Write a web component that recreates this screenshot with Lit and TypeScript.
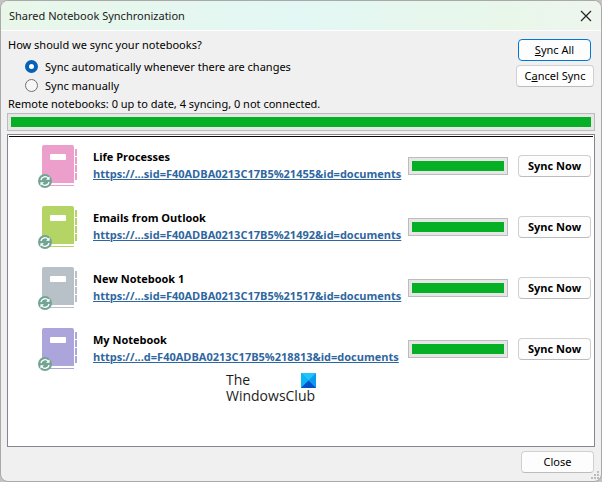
import { LitElement, html, css, svg } from "lit";
import { customElement, property } from "lit/decorators.js";

interface Notebook {
  name: string;
  link: string;
  color: string;
}

const NOTEBOOKS: Notebook[] = [
  { name: "Life Processes", link: "https://...sid=F40ADBA0213C17B5%21455&id=documents", color: "#eb9fca" },
  { name: "Emails from Outlook", link: "https://...sid=F40ADBA0213C17B5%21492&id=documents", color: "#b4d465" },
  { name: "New Notebook 1", link: "https://...sid=F40ADBA0213C17B5%21517&id=documents", color: "#b8c0c8" },
  { name: "My Notebook", link: "https://...d=F40ADBA0213C17B5%218813&id=documents", color: "#aba5dc" },
];

const buttonStyles = css`
  button {
    box-sizing: border-box;
    height: 22px;
    padding: 0;
    border: 1px solid #d0d0d0;
    border-bottom-color: #bcbcbc;
    border-radius: 4px;
    background: #fdfdfd;
    color: #000;
    font: inherit;
    line-height: 20px;
    white-space: nowrap;
  }
`;

@customElement("sync-progress")
export class SyncProgress extends LitElement {
  @property({ type: Number }) value = 100;
  @property() label = "";

  static styles = css`
    :host {
      display: block;
      box-sizing: border-box;
      height: 18px;
      padding: 3px;
      border: 1px solid #bcbcbc;
      background: #e6e6e6;
    }
    .fill {
      height: 10px;
      background: #06b025;
    }
  `;

  render() {
    return html`<div
      class="fill"
      role="progressbar"
      aria-label=${this.label}
      aria-valuenow=${this.value}
      style="width:${this.value}%"
    ></div>`;
  }
}

@customElement("notebook-icon")
export class NotebookIcon extends LitElement {
  @property() color = "#eb9fca";

  static styles = css`
    :host,
    svg {
      display: block;
    }
  `;

  render() {
    return html`<svg width="40" height="44" viewBox="0 0 40 44" aria-hidden="true">
      <g fill=${this.color}>
        <path d="M6 0h28q2 0 2 2v36H4V2q0-2 2-2z" />
        ${[4, 12, 20, 28].map((y) => svg`<rect x="37" y=${y} width="2" height="7" />`)}
        <rect x="4" y="40" width="32" height="1" />
      </g>
      <rect x="12" y="9" width="16" height="6" rx="1" fill="#fff" />
      <circle cx="7" cy="36" r="7" fill="#72a493" />
      <g fill="none" stroke="#fff" stroke-width="1.3">
        <path d="M2.9 35A4.2 4.2 0 0 1 10.2 33.2" />
        <path d="M11.1 37A4.2 4.2 0 0 1 3.8 38.8" />
      </g>
      <path d="M11.6 31.2V34.8H8zM2.4 40.8V37.2H6z" fill="#fff" />
    </svg>`;
  }
}

@customElement("notebook-row")
export class NotebookRow extends LitElement {
  @property({ attribute: false }) notebook!: Notebook;

  static styles = [
    buttonStyles,
    css`
      :host {
        display: flex;
        align-items: flex-start;
        height: 61px;
        padding: 0 3px 0 30px;
        box-sizing: border-box;
        font-family: "Open Sans", "Noto Sans", sans-serif;
        font-weight: 700;
      }
      notebook-icon {
        margin-top: 8px;
        flex: none;
      }
      .text {
        flex: 1;
        min-width: 0;
        margin: 11px 0 0 15px;
        line-height: 17px;
        white-space: nowrap;
      }
      .name {
        color: #000;
      }
      a {
        color: #2e66a0;
        text-decoration: underline;
      }
      sync-progress {
        flex: none;
        width: 100px;
        margin-top: 20px;
      }
      button {
        flex: none;
        width: 73px;
        margin: 18px 0 0 10px;
      }
    `,
  ];

  render() {
    const { name, link, color } = this.notebook;
    return html`
      <notebook-icon .color=${color}></notebook-icon>
      <div class="text">
        <div class="name">${name}</div>
        <a href="#">${link}</a>
      </div>
      <sync-progress .label=${name}></sync-progress>
      <button>Sync Now</button>
    `;
  }
}

@customElement("app-root")
export class AppRoot extends LitElement {
  static styles = [
    buttonStyles,
    css`
      :host {
        display: block;
        height: 100vh;
        box-sizing: border-box;
        background: #c4c2c2;
        font: 11px/16px "Noto Sans", "Open Sans", sans-serif;
        color: #000;
      }
      .dialog {
        position: relative;
        display: flex;
        flex-direction: column;
        height: 100%;
        box-sizing: border-box;
        border: 1px solid #a9a9a9;
        border-radius: 8px;
        background: #f0f0f0;
        overflow: hidden;
      }
      header {
        display: flex;
        align-items: center;
        justify-content: space-between;
        height: 29px;
        flex: none;
        padding: 0 9px 0 8px;
        border-bottom: 1px solid #fff;
        background: linear-gradient(90deg, #e9f7ea, #e3f7f4 50%, #e9f7ea 85%, #eef5ee);
      }
      h1 {
        margin: 0;
        font-size: 11px;
        font-weight: 400;
        color: #1a1a1a;
      }
      .x {
        display: block;
        width: 12px;
        height: 12px;
        border: 0;
        background: none;
      }
      .x svg {
        display: block;
      }
      .top {
        display: flex;
        justify-content: space-between;
        padding: 6px 7px 0;
      }
      fieldset {
        margin: 0;
        padding: 0;
        border: 0;
      }
      legend {
        padding: 0;
        line-height: 16px;
      }
      label {
        display: flex;
        align-items: center;
        gap: 7px;
        height: 19px;
        padding-left: 17px;
      }
      .first {
        margin-top: 4px;
      }
      input {
        appearance: none;
        box-sizing: border-box;
        width: 13px;
        height: 13px;
        margin: 0;
        border: 1px solid #707070;
        border-radius: 50%;
        background: #f6f6f6;
      }
      input:checked {
        border: 4px solid #0560b8;
        background: #fff;
      }
      .actions {
        display: flex;
        flex-direction: column;
        align-items: flex-end;
        gap: 4px;
        padding-top: 2px;
      }
      .all {
        width: 73px;
        margin-right: 3px;
        border-color: #0078d4;
      }
      .cancel {
        width: 78px;
      }
      .status {
        margin: 1px 7px 0;
      }
      .total {
        margin: 1px 6px 0;
      }
      .list {
        position: relative;
        flex: 1;
        margin: 3px 6px 4px;
        border: 1px solid #828790;
        background: #fff;
      }
      .rule {
        height: 1px;
        margin: 1px 1px 0;
        background: #1a0005;
      }
      .brand {
        position: absolute;
        left: 218px;
        top: 237px;
        width: 90px;
        font: 14px/16px "Open Sans", sans-serif;
        color: #1c1c1c;
      }
      .brand-top {
        display: flex;
        justify-content: space-between;
        align-items: center;
      }
      footer {
        display: flex;
        justify-content: flex-end;
        padding: 0 7px 8px;
      }
      .close {
        width: 73px;
      }
      .grip {
        position: absolute;
        right: 2px;
        bottom: 2px;
      }
    `,
  ];

  render() {
    return html`
      <div class="dialog">
        <header>
          <h1>Shared Notebook Synchronization</h1>
          <button class="x" aria-label="Close window">
            <svg width="12" height="12" viewBox="0 0 12 12">
              <path d="M1 1l10 10M11 1L1 11" stroke="#222" stroke-width="1.2" />
            </svg>
          </button>
        </header>
        <div class="top">
          <fieldset>
            <legend>How should we sync your notebooks?</legend>
            <label class="first"><input type="radio" name="mode" checked />Sync automatically whenever there are changes</label>
            <label><input type="radio" name="mode" />Sync manually</label>
          </fieldset>
          <div class="actions">
            <button class="all"><u>S</u>ync All</button>
            <button class="cancel">C<u>a</u>ncel Sync</button>
          </div>
        </div>
        <div class="status">Remote notebooks: 0 up to date, 4 syncing, 0 not connected.</div>
        <sync-progress class="total" label="All notebooks"></sync-progress>
        <div class="list">
          <div class="rule"></div>
          ${NOTEBOOKS.map((n) => html`<notebook-row .notebook=${n}></notebook-row>`)}
          <div class="brand">
            <div class="brand-top">
              The
              <svg width="15" height="15" viewBox="0 0 15 15" aria-hidden="true">
                <path d="M0 0h15v15H0z" fill="#0a9bf0" />
                <path d="M0 0h15L7.5 7.5z" fill="#22c3fb" />
                <path d="M0 0l7.5 7.5L0 15z" fill="#0cb4f5" />
                <path d="M0 15l7.5-7.5L15 15z" fill="#0450c8" />
              </svg>
            </div>
            <div>WindowsClub</div>
          </div>
        </div>
        <footer><button class="close">Close</button></footer>
        <svg class="grip" width="8" height="8" viewBox="0 0 8 8" aria-hidden="true">
          <path d="M6 0h2v2H6zM3 3h2v2H3zM6 3h2v2H6zM0 6h2v2H0zM3 6h2v2H3zM6 6h2v2H6z" fill="#bdbdbd" />
        </svg>
      </div>
    `;
  }
}
